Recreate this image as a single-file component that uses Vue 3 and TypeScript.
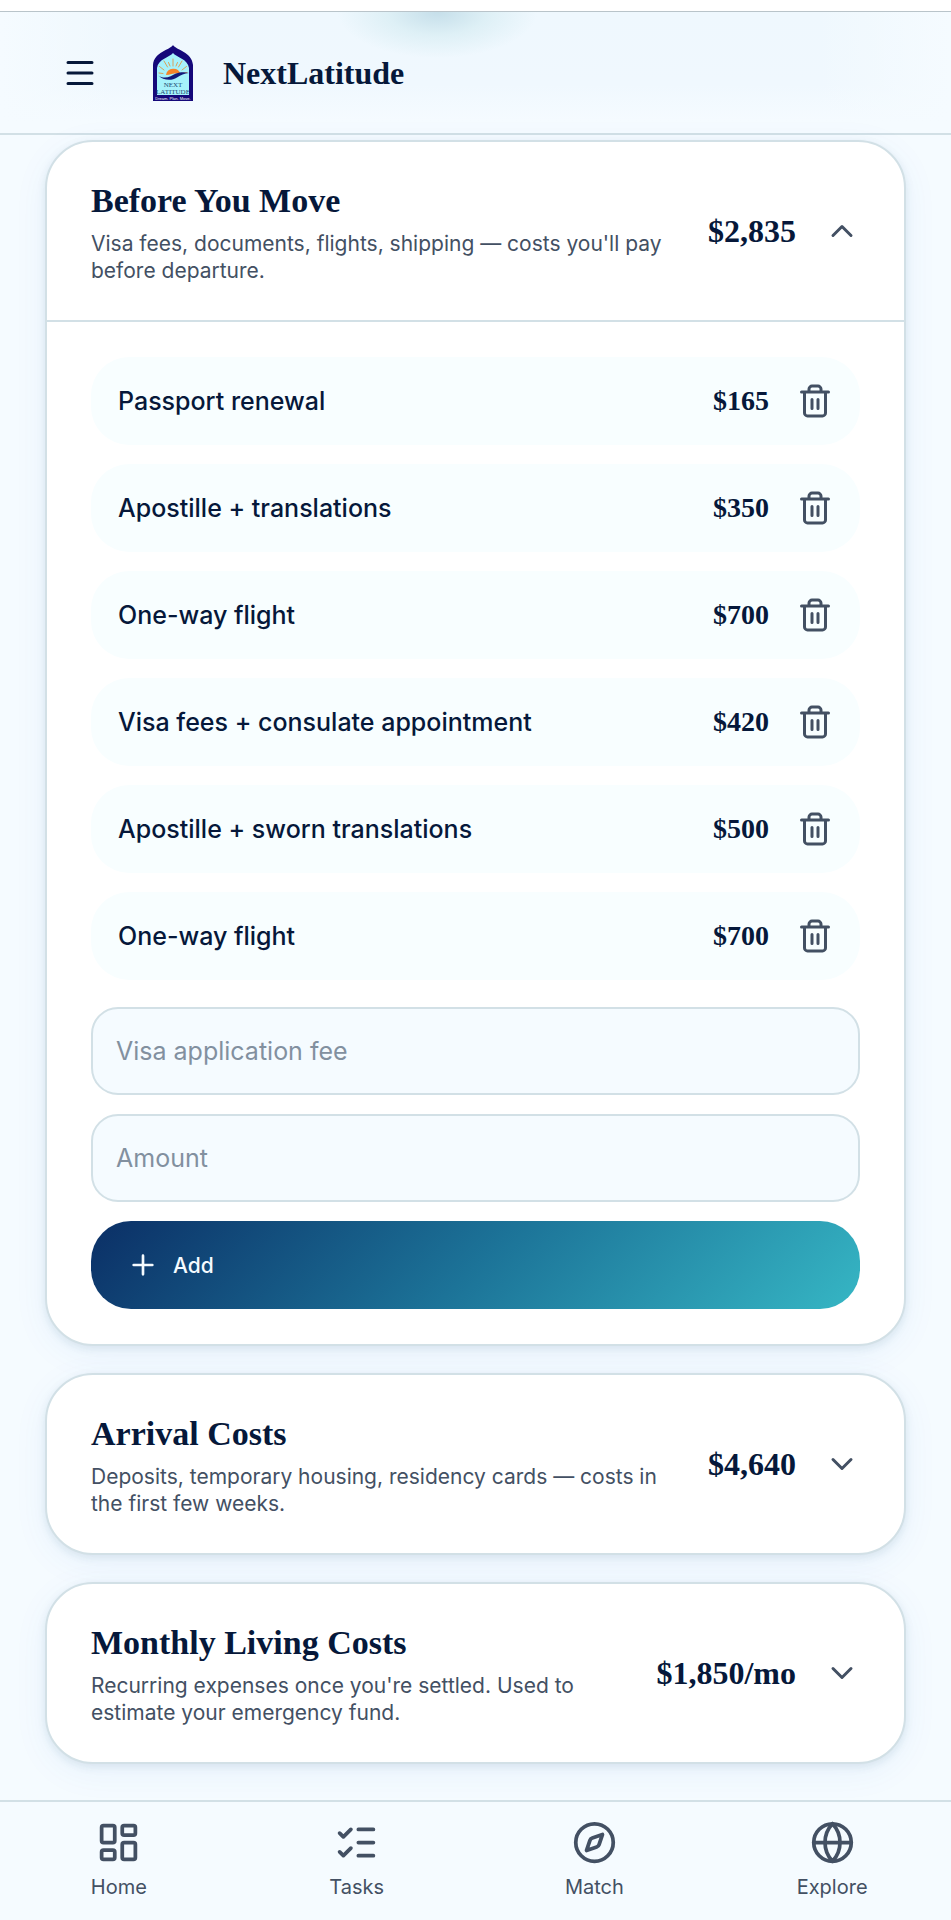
<script setup lang="ts">
import { computed, reactive, ref } from 'vue'

interface CostItem {
  id: number
  name: string
  amount: number
}

interface CostSection {
  key: string
  title: string
  description: string
  baseTotal: number
  suffix: string
  open: boolean
  items: CostItem[]
}

const sections = reactive<CostSection[]>([
  {
    key: 'before',
    title: 'Before You Move',
    description: "Visa fees, documents, flights, shipping — costs you'll pay before departure.",
    baseTotal: 0,
    suffix: '',
    open: true,
    items: [
      { id: 1, name: 'Passport renewal', amount: 165 },
      { id: 2, name: 'Apostille + translations', amount: 350 },
      { id: 3, name: 'One-way flight', amount: 700 },
      { id: 4, name: 'Visa fees + consulate appointment', amount: 420 },
      { id: 5, name: 'Apostille + sworn translations', amount: 500 },
      { id: 6, name: 'One-way flight', amount: 700 },
    ],
  },
  {
    key: 'arrival',
    title: 'Arrival Costs',
    description: 'Deposits, temporary housing, residency cards — costs in the first few weeks.',
    baseTotal: 4640,
    suffix: '',
    open: false,
    items: [],
  },
  {
    key: 'monthly',
    title: 'Monthly Living Costs',
    description: "Recurring expenses once you're settled. Used to estimate your emergency fund.",
    baseTotal: 1850,
    suffix: '/mo',
    open: false,
    items: [],
  },
])

const draftName = ref('')
const draftAmount = ref('')
const nextId = ref(7)

const money = (value: number): string => '$' + value.toLocaleString('en-US')

const totals = computed<string[]>(() =>
  sections.map((s) => money(s.items.reduce((sum, item) => sum + item.amount, s.baseTotal)) + s.suffix),
)

function removeItem(section: CostSection, id: number): void {
  section.items = section.items.filter((item) => item.id !== id)
}

function addItem(section: CostSection): void {
  const amount = Number(draftAmount.value)
  if (!draftName.value || !Number.isFinite(amount)) return
  section.items.push({ id: nextId.value++, name: draftName.value, amount })
  draftName.value = ''
  draftAmount.value = ''
}
</script>

<template>
  <div class="page">
    <header class="topbar">
      <button class="menu" type="button" aria-label="Open menu">
        <svg class="icon-menu" viewBox="0 0 36 36" aria-hidden="true">
          <path d="M6 7.500h24M6 18h24M6 28.500h24" />
        </svg>
      </button>
      <a class="brand" href="#">
        <svg class="logo" viewBox="0 0 40 56" aria-hidden="true">
          <path d="M20 0C23 5 39 7 40 20V56H0V20C1 7 17 5 20 0Z" fill="#15087a" />
          <path d="M20 8C23 12 35 14 36 23V50H4V23C5 14 17 12 20 8Z" fill="#a6f2fb" />
          <path
            d="M20 21V14M14.500 22L11 16M25.500 22L29 16M11 25L6.500 21.500M29 25L33.500 21.500M17 21L15.500 17.500M23 21L24.500 17.500M10 28.500L6 28M30 28L34 27.500"
            stroke="#d9a05a" stroke-width="1" stroke-linecap="round" fill="none"
          />
          <path d="M13 30a7.500 7.500 0 0 1 14.500-1C23 27 18 30 13 30Z" fill="#f5842a" />
          <path d="M5 30.500C12 35 18 31 23 28.500C28 26.500 32 27 36 28C31 28.500 28 30 24 32.500C18 36.500 10 35 5 30.500Z" fill="#12187a" />
          <text class="logo-name" x="20" y="42">NEXT</text>
          <text class="logo-name" x="20" y="48.500">LATITUDE</text>
          <text class="logo-tag" x="20" y="54.500">Dream. Plan. Move.</text>
        </svg>
        <span class="brand-name">NextLatitude</span>
      </a>
    </header>

    <main class="content">
      <section v-for="(section, index) in sections" :key="section.key" class="card">
        <button
          class="card-head"
          type="button"
          :aria-expanded="section.open"
          @click="section.open = !section.open"
        >
          <span class="card-copy">
            <span class="card-title">{{ section.title }}</span>
            <span class="card-description">{{ section.description }}</span>
          </span>
          <span class="card-total">{{ totals[index] }}</span>
          <svg class="icon" viewBox="0 0 24 24" aria-hidden="true">
            <path v-if="section.open" d="m18 15-6-6-6 6" />
            <path v-else d="m6 9 6 6 6-6" />
          </svg>
        </button>

        <div v-if="section.open" class="card-body">
          <ul class="items">
            <li v-for="item in section.items" :key="item.id" class="item">
              <span class="item-name">{{ item.name }}</span>
              <span class="item-amount">{{ money(item.amount) }}</span>
              <button
                class="remove"
                type="button"
                :aria-label="'Remove ' + item.name"
                @click="removeItem(section, item.id)"
              >
                <svg class="icon" viewBox="0 0 24 24" aria-hidden="true">
                  <path d="M3 6h18M19 6v14c0 1-1 2-2 2H7c-1 0-2-1-2-2V6M8 6V4c0-1 1-2 2-2h4c1 0 2 1 2 2v2M10 11v6M14 11v6" />
                </svg>
              </button>
            </li>
          </ul>
          <form class="form" @submit.prevent="addItem(section)">
            <input v-model="draftName" class="field" type="text" placeholder="Visa application fee" aria-label="Cost name" />
            <input v-model="draftAmount" class="field" type="text" inputmode="decimal" placeholder="Amount" aria-label="Amount" />
            <button class="add" type="submit">
              <svg class="icon-plus" viewBox="0 0 24 24" aria-hidden="true"><path d="M5 12h14M12 5v14" /></svg>
              <span>Add</span>
            </button>
          </form>
        </div>
      </section>
    </main>

    <nav class="tabs" aria-label="Main">
      <a class="tab" href="#home">
        <svg class="tab-icon" viewBox="0 0 24 24" aria-hidden="true">
          <rect x="3" y="3" width="7" height="9" rx="1" />
          <rect x="14" y="3" width="7" height="5" rx="1" />
          <rect x="14" y="12" width="7" height="9" rx="1" />
          <rect x="3" y="16" width="7" height="5" rx="1" />
        </svg>
        <span>Home</span>
      </a>
      <a class="tab" href="#tasks">
        <svg class="tab-icon" viewBox="0 0 24 24" aria-hidden="true">
          <path d="m3 17 2 2 4-4M3 7l2 2 4-4M13 5h8M13 12h8M13 19h8" />
        </svg>
        <span>Tasks</span>
      </a>
      <a class="tab" href="#match">
        <svg class="tab-icon" viewBox="0 0 24 24" aria-hidden="true">
          <circle cx="12" cy="12" r="10" />
          <path d="m16.240 7.760-1.804 5.411a2 2 0 0 1-1.265 1.265L7.760 16.240l1.804-5.411a2 2 0 0 1 1.265-1.265z" />
        </svg>
        <span>Match</span>
      </a>
      <a class="tab" href="#explore">
        <svg class="tab-icon" viewBox="0 0 24 24" aria-hidden="true">
          <circle cx="12" cy="12" r="10" />
          <path d="M12 2a14.500 14.500 0 0 0 0 20 14.500 14.500 0 0 0 0-20M2 12h20" />
        </svg>
        <span>Explore</span>
      </a>
    </nav>
  </div>
</template>

<style>
body {
  margin: 0;
  background: #ffffff;
}
</style>

<style scoped>
.page {
  --ink: #06183a;
  --slate: #435063;
  --line: #d2e0e6;
  --serif: "Liberation Serif", serif;
  box-sizing: border-box;
  display: flex;
  flex-direction: column;
  min-height: 100vh;
  border-top: 11px solid #ffffff;
  background: #f5fbff;
  color: var(--ink);
  font-family: Inter, sans-serif;
}

button {
  font: inherit;
  color: inherit;
  background: none;
  border: 0;
  padding: 0;
  cursor: pointer;
}

.topbar {
  display: flex;
  align-items: center;
  gap: 55px;
  height: 121px;
  padding: 0 62px;
  border-top: 1px solid #b9c4ca;
  border-bottom: 2px solid var(--line);
  background:
    radial-gradient(ellipse 100px 46px at 46% 0, rgba(190, 218, 230, 0.85), rgba(205, 232, 238, 0.5) 50%, rgba(230, 246, 250, 0) 100%),
    linear-gradient(to right, #f5fbff, rgba(245, 251, 255, 0) 12% 86%, #f5fbff),
    linear-gradient(#eff8fe, #f0f8fe 60%, #f5fbff 90%);
}

.menu {
  display: flex;
}

.icon-menu {
  width: 36px;
  height: 36px;
  fill: none;
  stroke: var(--ink);
  stroke-width: 3;
  stroke-linecap: round;
}

.brand {
  display: flex;
  align-items: center;
  gap: 30px;
  color: var(--ink);
  text-decoration: none;
}

.logo {
  width: 40px;
  height: 56px;
}

.logo-name {
  font: 7px "Liberation Serif", serif;
  fill: #1d4a72;
  text-anchor: middle;
}

.logo-tag {
  font: 4px "Liberation Sans", sans-serif;
  fill: #ffffff;
  text-anchor: middle;
}

.brand-name {
  font: 700 32px/40px var(--serif);
}

.content {
  display: flex;
  flex-direction: column;
  gap: 27px;
  padding: 5px 45px 36px;
}

.card {
  border: 2px solid var(--line);
  border-radius: 48px;
  background: #ffffff;
  box-shadow:
    0 3px 8px rgba(20, 80, 100, 0.1),
    0 8px 36px rgba(40, 100, 220, 0.06);
}

.card-head {
  display: flex;
  align-items: center;
  gap: 28px;
  width: 100%;
  padding: 36px 44px;
  text-align: left;
}

.card-copy {
  display: flex;
  flex: 1;
  flex-direction: column;
  gap: 6px;
}

.card-title {
  font: 700 34px/46px var(--serif);
}

.card-description {
  color: var(--slate);
  font-size: 21px;
  line-height: 27px;
}

.card-total {
  font: 700 32px/40px var(--serif);
}

.icon {
  display: block;
  flex: none;
  width: 36px;
  height: 36px;
  fill: none;
  stroke: var(--slate);
  stroke-width: 2;
  stroke-linecap: round;
  stroke-linejoin: round;
}

.card-body {
  padding: 35px 44px;
  border-top: 2px solid var(--line);
}

.items {
  display: flex;
  flex-direction: column;
  gap: 19px;
  margin: 0 0 27px;
  padding: 0;
  list-style: none;
}

.item {
  box-sizing: border-box;
  display: flex;
  align-items: center;
  gap: 28px;
  height: 88px;
  padding: 0 27px;
  border-radius: 38px;
  background: #f8feff;
}

.item-name {
  flex: 1;
  font-size: 25px;
  font-weight: 500;
}

.item-amount {
  font: 700 28px/36px var(--serif);
}

.form {
  display: flex;
  flex-direction: column;
  gap: 19px;
}

.field {
  box-sizing: border-box;
  width: 100%;
  height: 88px;
  padding: 0 23px;
  border: 2px solid var(--line);
  border-radius: 27px;
  background: #f5fbff;
  color: var(--ink);
  font: 25px Inter, sans-serif;
}

.field::placeholder {
  color: #82909f;
  opacity: 1;
}

.add {
  display: flex;
  align-items: center;
  gap: 14px;
  height: 88px;
  padding: 0 36px;
  border-radius: 40px;
  background: linear-gradient(135deg, #0b2f66, #1c7398 50%, #36b6c4);
  color: #f5fbff;
  font-size: 21px;
  font-weight: 500;
}

.icon-plus {
  width: 32px;
  height: 32px;
  fill: none;
  stroke: currentColor;
  stroke-width: 2;
  stroke-linecap: round;
}

.tabs {
  box-sizing: border-box;
  display: flex;
  height: 120px;
  margin-top: auto;
  padding-top: 18px;
  border-top: 2px solid var(--line);
  background: #f5fbff;
}

.tab {
  display: flex;
  flex: 1;
  flex-direction: column;
  align-items: center;
  gap: 8px;
  color: var(--slate);
  font-size: 20px;
  line-height: 28px;
  text-decoration: none;
}

.tab-icon {
  width: 45px;
  height: 45px;
  fill: none;
  stroke: currentColor;
  stroke-width: 2;
  stroke-linecap: round;
  stroke-linejoin: round;
}
</style>
